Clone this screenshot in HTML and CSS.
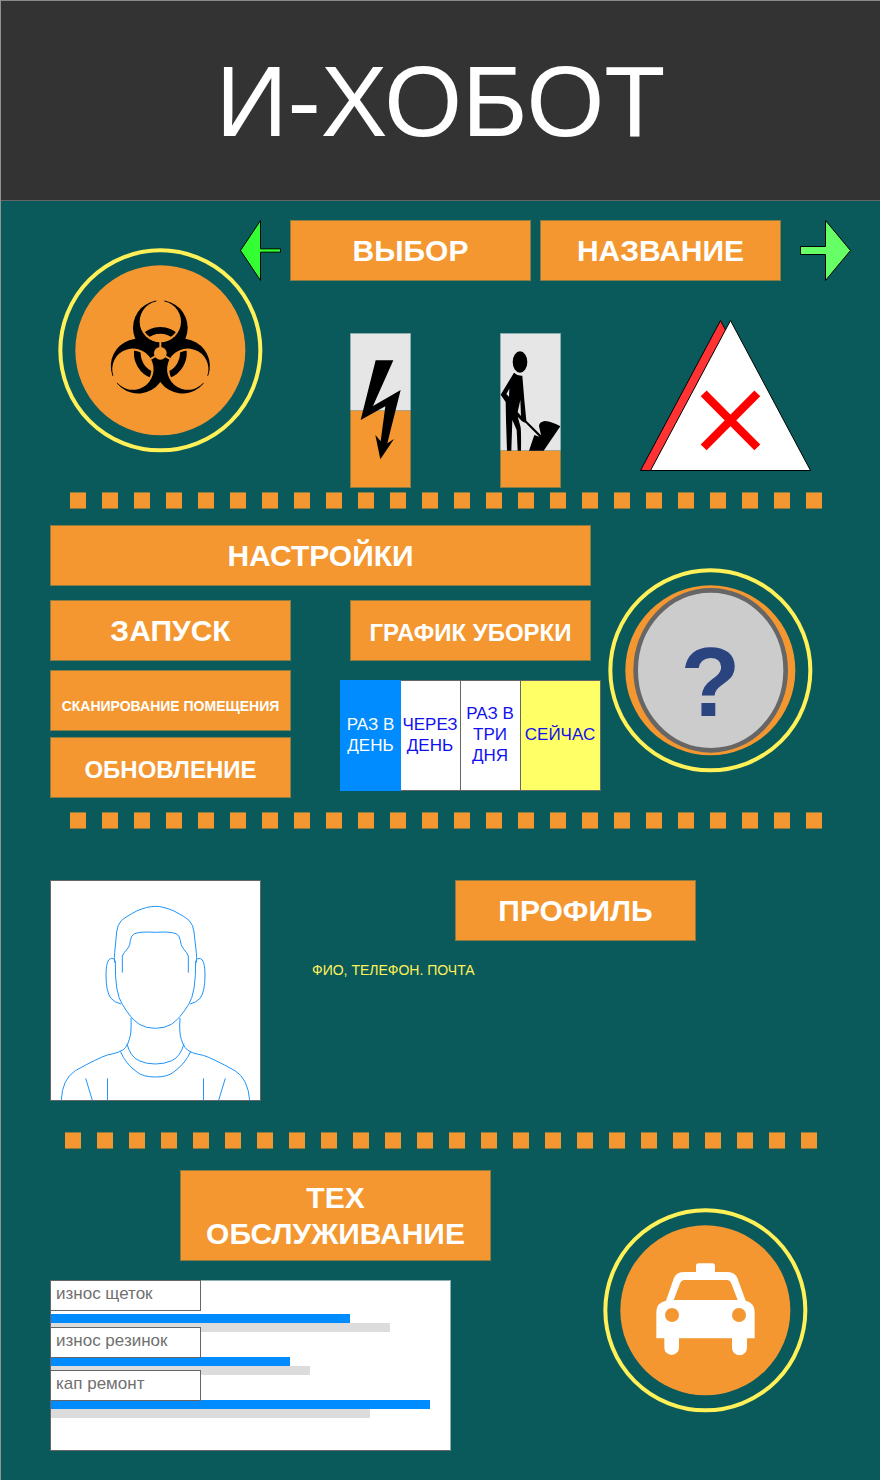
FILE: index.html
```html
<!DOCTYPE html>
<html lang="ru">
<head>
<meta charset="utf-8">
<meta name="viewport" content="width=device-width, initial-scale=1">
<title>И-ХОБОТ</title>
<link rel="stylesheet" href="styles.css">
</head>
<body>
<header class="masthead"><h1 class="masthead-title">И-ХОБОТ</h1></header>
<main>
  <section class="device">
    <svg class="badge" viewBox="24 24 615 615" aria-hidden="true">
      <defs><clipPath id="lobe"><circle cx="331" cy="243" r="57"/></clipPath></defs>
      <circle class="badge-ring" cx="331" cy="331" r="300"/>
      <circle class="badge-disc" cx="331" cy="331" r="255"/>
      <g>
        <circle cx="331" cy="263" r="82"/>
        <circle cx="331" cy="263" r="82" transform="rotate(120 331 340)"/>
        <circle cx="331" cy="263" r="82" transform="rotate(240 331 340)"/>
      </g>
      <g class="badge-disc">
        <circle cx="331" cy="245" r="62"/>
        <circle cx="331" cy="245" r="62" transform="rotate(120 331 340)"/>
        <circle cx="331" cy="245" r="62" transform="rotate(240 331 340)"/>
        <circle cx="331" cy="340" r="19"/>
        <path d="M328 300h6v40h-6zM319 178h24v12h-24z"/>
        <path d="M328 300h6v40h-6zM319 178h24v12h-24z" transform="rotate(120 331 340)"/>
        <path d="M328 300h6v40h-6zM319 178h24v12h-24z" transform="rotate(240 331 340)"/>
      </g>
      <g class="hazard-arc">
        <g clip-path="url(#lobe)"><circle cx="331" cy="340" r="69"/></g>
        <g transform="rotate(120 331 340)"><g clip-path="url(#lobe)"><circle cx="331" cy="340" r="69"/></g></g>
        <g transform="rotate(240 331 340)"><g clip-path="url(#lobe)"><circle cx="331" cy="340" r="69"/></g></g>
      </g>
    </svg>
    <div class="device-body">
      <div class="selector">
        <button class="arrow" type="button" aria-label="Назад"><svg class="arrow-prev" viewBox="30 30 123 183"><path d="M31.500 121.500L91.500 31.500V116.500H151.500V126.500H91.500V211.500Z"/></svg></button>
        <button class="box selector-box" type="button">ВЫБОР</button>
        <button class="box selector-box" type="button">НАЗВАНИЕ</button>
        <button class="arrow arrow-end" type="button" aria-label="Вперёд"><svg class="arrow-next" viewBox="810 30 153 183"><path d="M811.500 109.500H886.500V31.500L961.500 121.500L886.500 211.500V133.500H811.500Z"/></svg></button>
      </div>
      <div class="status">
        <svg class="gauge" viewBox="30 39 183 465" role="img" aria-label="Заряд">
          <path fill="#e6e6e6" stroke="#8caeb0" stroke-width="3" d="M31.500 40.500H211.500V502.500H31.500Z"/>
          <path fill="#f49730" stroke="#8a7c42" stroke-width="3" d="M31.500 271.500H211.500V502.500H31.500Z"/>
          <path stroke="#aaa58a" stroke-width="3" d="M33 271.500H210"/>
          <path d="M107 121H160L99 258L182 210L142 370L162 357L121 418L106 345L122 364L136 259L62 300Z"/>
        </svg>
        <svg class="gauge" viewBox="480 39 183 465" role="img" aria-label="Мусор">
          <path fill="#e6e6e6" stroke="#8caeb0" stroke-width="3" d="M481.500 40.500H661.500V502.500H481.500Z"/>
          <path fill="#f49730" stroke="#8a7c42" stroke-width="3" d="M481.500 391.500H661.500V502.500H481.500Z"/>
          <path stroke="#aaa58a" stroke-width="3" d="M483 391.500H660"/>
          <ellipse cx="540" cy="126" rx="22" ry="32"/>
          <path fill-rule="evenodd" d="M522 158Q532 168 547 167L553 240L559 302L603 346L597 318Q597 306 614 303Q638 305 661 319L611 392H567L583 345L598 350L557 309L546 304L533 290L541 318Q544 326 543 392H533L530 330L517 300L514 392H501L498 300L497 246L482 224ZM508 206L499 222L507 230ZM541 240L533 276L543 288Z"/>
        </svg>
        <svg class="alert" viewBox="30 30 513 453" role="img" aria-label="Ошибка">
          <path class="alert-shadow" d="M31.500 481.500L271.500 31.500L511.500 481.500Z"/>
          <path class="alert-face" d="M61.500 481.500L301.500 31.500L541.500 481.500Z"/>
          <path class="alert-cross" d="M221 250L382 412M382 250L221 412"/>
        </svg>
      </div>
    </div>
  </section>

  <div class="divider"></div>

  <section class="settings">
    <div class="settings-body">
      <h2 class="box settings-title">НАСТРОЙКИ</h2>
      <div class="settings-actions">
        <button class="box" type="button">ЗАПУСК</button>
        <button class="box box-small scan" type="button">СКАНИРОВАНИЕ ПОМЕЩЕНИЯ</button>
        <button class="box box-medium" type="button">ОБНОВЛЕНИЕ</button>
      </div>
      <div class="schedule">
        <h3 class="box box-medium schedule-title">ГРАФИК УБОРКИ</h3>
        <div class="options">
          <button class="option option-active" type="button">РАЗ В ДЕНЬ</button>
          <button class="option" type="button">ЧЕРЕЗ ДЕНЬ</button>
          <button class="option" type="button">РАЗ В ТРИ ДНЯ</button>
          <button class="option option-now" type="button">СЕЙЧАС</button>
        </div>
      </div>
    </div>
    <svg class="badge settings-badge" viewBox="24 24 615 615" role="img" aria-label="Справка">
      <circle class="badge-ring" cx="331" cy="331" r="300"/>
      <circle class="badge-disc" cx="331" cy="331" r="255"/>
      <ellipse cx="332" cy="331" rx="225" ry="240" fill="#ccc" stroke="#666" stroke-width="14"/>
      <text class="badge-mark" x="331" y="468" text-anchor="middle">?</text>
    </svg>
  </section>

  <div class="divider"></div>

  <section class="profile">
    <svg class="photo" viewBox="30 30 633 663" role="img" aria-label="Фото">
      <path fill="#fff" stroke="#666" stroke-width="3" d="M31.500 31.500H661.500V691.500H31.500Z"/>
      <g class="photo-line">
        <path d="M224 278Q222 262 224 248L230 186Q232 165 244 152Q256 141 290 123Q322 109 346 109Q370 109 402 123Q436 141 448 152Q460 165 462 186L469 248Q471 262 469 278"/>
        <path d="M226 272Q224 370 247 403Q272 446 298 463Q318 475 346 475Q374 475 394 463Q420 446 446 403Q468 370 467 272"/>
        <path d="M247 308V258Q250 250 264 234Q271 226 271 211Q273 196 284 191Q302 184 346 187Q390 184 408 191Q419 196 421 211Q422 226 429 234Q442 250 445 258V308"/>
        <path d="M224 270Q216 260 206 270Q198 282 198 315Q198 364 212 384Q224 398 243 402"/>
        <path d="M469 270Q477 260 487 270Q495 282 495 315Q495 364 481 384Q469 398 450 402"/>
        <path d="M273 444Q275 490 268 508Q260 538 240 544Q235 548 202 555Q172 565 106 602Q66 628 64 691"/>
        <path d="M420 444Q417 490 424 508Q432 538 453 546Q459 550 490 556Q518 565 585 602Q624 626 629 691"/>
        <path d="M261 521Q270 560 297 572Q318 582 346 582Q374 582 395 572Q422 560 432 521"/>
        <path d="M241 544Q257 582 292 607Q310 621 346 621Q382 621 400 607Q435 582 452 545"/>
        <path d="M137 625L157 691M202.500 625V691M490.500 625V691M556 625L536 691"/>
      </g>
    </svg>
    <div class="profile-body">
      <h2 class="box profile-title">ПРОФИЛЬ</h2>
      <p class="profile-info">ФИО, ТЕЛЕФОН. ПОЧТА</p>
    </div>
  </section>

  <div class="divider divider-shifted"></div>

  <section class="service">
    <div class="service-body">
      <h2 class="box service-title">ТЕХ ОБСЛУЖИВАНИЕ</h2>
      <div class="chart">
        <div class="bars">
          <div class="pair"><div class="bar" style="width:75%"></div><div class="bar bar-past" style="width:85%"></div></div>
          <div class="pair"><div class="bar" style="width:60%"></div><div class="bar bar-past" style="width:65%"></div></div>
          <div class="pair"><div class="bar" style="width:95%"></div><div class="bar bar-past" style="width:80%"></div></div>
        </div>
        <ul class="chart-labels">
          <li class="chart-label chart-label-first">износ щеток</li>
          <li class="chart-label">износ резинок</li>
          <li class="chart-label">кап ремонт</li>
        </ul>
      </div>
    </div>
    <svg class="badge service-badge" viewBox="24 24 615 615" aria-hidden="true">
      <circle class="badge-ring" cx="331" cy="331" r="300"/>
      <circle class="badge-disc" cx="331" cy="331" r="255"/>
      <g fill="#fff">
        <rect x="303" y="190" width="57" height="40" rx="8"/>
        <path fill-rule="evenodd" d="M184 415V336Q184 308 213 302L236 236Q243 217 265 216H398Q421 217 428 236L452 302Q479 309 479 336V415H456V443A22 22 0 0 1 411 443V415H252V443A22 22 0 0 1 208 443V415ZM236 300H428L408 248Q404 240 397 240H267Q260 240 256 248Z"/>
      </g>
      <circle class="badge-disc" cx="231" cy="345" r="21"/>
      <circle class="badge-disc" cx="432" cy="345" r="21"/>
    </svg>
  </section>
</main>
</body>
</html>
```
FILE: styles.css
```css
* {
  box-sizing: border-box;
}

body {
  margin: 0;
  min-height: 100vh;
  background: #0a595b;
  border-left: 1px solid #8a9596;
  font-family: "Liberation Sans", Arial, sans-serif;
}

h1, h2, h3, p, ul {
  margin: 0;
  padding: 0;
}

button {
  font-family: inherit;
  cursor: pointer;
}

svg {
  display: block;
  flex: none;
}

.masthead {
  display: flex;
  align-items: center;
  justify-content: center;
  height: 201px;
  background: #333;
  border-top: 1px solid #8a8a8a;
  border-bottom: 1px solid #666;
}

.masthead-title {
  color: #fff;
  font-size: 100px;
  font-weight: 400;
  line-height: 120px;
}

.box {
  display: flex;
  align-items: center;
  justify-content: center;
  min-height: 61px;
  padding: 0;
  background: #f49730;
  border: 1px solid #8a7c42;
  border-radius: 0;
  color: #fff;
  font-size: 30px;
  font-weight: 700;
  line-height: 36px;
  text-align: center;
}

.box-medium {
  padding-top: 4px;
  font-size: 24px;
}

.box-small {
  padding-top: 10px;
  font-size: 14px;
}

.badge {
  width: 205px;
  height: 205px;
}

.badge-ring {
  fill: none;
  stroke: #fff157;
  stroke-width: 12px;
}

.badge-disc {
  fill: #f49730;
}

.badge-mark {
  fill: #2a4480;
  font-size: 294px;
  font-weight: 700;
}

.hazard-arc {
  fill: none;
  stroke: #000;
  stroke-width: 20px;
}

.divider {
  height: 17px;
  margin: 0 58px 0 69px;
  background:
    repeating-linear-gradient(90deg, transparent 0 16px, #0a595b 16px 32px),
    linear-gradient(#8a7c42 1px, #f49730 1px 16px, #8a7c42 16px);
}

.divider-shifted {
  margin: 0 63px 0 64px;
}

/* Device */
.device {
  display: flex;
  padding: 19px 29px 4px 57px;
}

.device .badge {
  margin: 28px -23px 0 0;
}

.device-body {
  flex: 1;
}

.selector {
  display: flex;
  gap: 9px;
}

.selector-box {
  flex: 1;
}

.arrow {
  padding: 0;
  background: none;
  border: 0;
}

.arrow-end {
  margin-left: 10px;
}

.arrow-prev,
.arrow-next {
  height: 61px;
  stroke: #000;
  stroke-width: 3px;
}

.arrow-prev {
  width: 41px;
  fill: #3f3;
}

.arrow-next {
  width: 51px;
  fill: #6f6;
}

.status {
  display: grid;
  grid-template-columns: 150fr 140fr 171px;
  padding: 39px 40px 0 110px;
}

.gauge {
  width: 61px;
  height: 155px;
  margin-top: 13px;
}

.alert {
  width: 171px;
  height: 151px;
}

.alert-shadow,
.alert-face {
  stroke: #000;
  stroke-width: 3px;
}

.alert-shadow {
  fill: #f33;
}

.alert-face {
  fill: #fff;
}

.alert-cross {
  stroke: #f00;
  stroke-width: 25px;
}

/* Settings */
.settings {
  display: flex;
  gap: 7px;
  padding: 16px 67px 14px 49px;
}

.settings-body {
  flex: 1;
  display: grid;
  grid-template-columns: minmax(0, 241fr) minmax(0, 261fr);
  column-gap: 49px;
  row-gap: 14px;
}

.settings-title {
  grid-column: 1 / -1;
  margin-right: 10px;
}

.settings-actions {
  display: flex;
  flex-direction: column;
}

.scan {
  margin: 9px 0 6px;
}

.schedule-title {
  margin: 0 10px 19px;
}

.options {
  display: grid;
  grid-template-columns: 60fr 60fr 60fr 80fr;
  min-height: 111px;
  border: 1px solid #666;
  border-left: 0;
}

.option {
  padding: 0 1px 2px 0;
  background: #fff;
  border: 0;
  border-left: 1px solid #666;
  border-radius: 0;
  color: #1010f0;
  font-size: 17px;
  line-height: 21px;
}

.option-active {
  margin: -1px;
  margin-left: 0;
  z-index: 1;
  background: #008cff;
  border-color: #008cff;
  color: #fff;
}

.option-now {
  background: #ff6;
}

.settings-badge {
  margin-top: 43px;
}

/* Profile */
.profile {
  display: flex;
  gap: 51px;
  padding: 51px 184px 31px 49px;
}

.photo {
  width: 211px;
  height: 221px;
}

.photo-line {
  fill: none;
  stroke: #1e94fa;
  stroke-width: 3px;
}

.profile-body {
  flex: 1;
}

.profile-title {
  width: 241px;
  margin-left: auto;
}

.profile-info {
  margin-top: 20px;
  color: #fff157;
  font-size: 14px;
  line-height: 18px;
}

/* Service */
.service {
  display: flex;
  justify-content: space-between;
  padding: 21px 72px 29px 49px;
}

.service-body {
  width: 441px;
}

.service-title {
  width: 311px;
  min-height: 91px;
  margin: 0 0 19px auto;
  padding: 0 20px;
}

.chart {
  position: relative;
  width: 401px;
  min-height: 171px;
  background: #fff;
  border: 1px solid #8caeb0;
  border-left-color: #666;
  border-bottom-color: #666;
}

.bars {
  display: flex;
  flex-direction: column;
  gap: 25px;
  padding-top: 33px;
}

.bar {
  height: 9px;
  background: #008cff;
}

.bar-past {
  background: #dcdcdc;
}

.chart-labels {
  position: absolute;
  top: -1px;
  left: -1px;
  width: 151px;
  display: flex;
  flex-direction: column;
  gap: 12px;
  list-style: none;
}

.chart-label {
  height: 31px;
  padding: 2px 5px;
  background: #fff;
  border: 1px solid #666;
  color: #707070;
  font-size: 17px;
  line-height: 21px;
}

.chart-label-first {
  margin-bottom: 4px;
}

.service-badge {
  margin-top: 38px;
}
```
